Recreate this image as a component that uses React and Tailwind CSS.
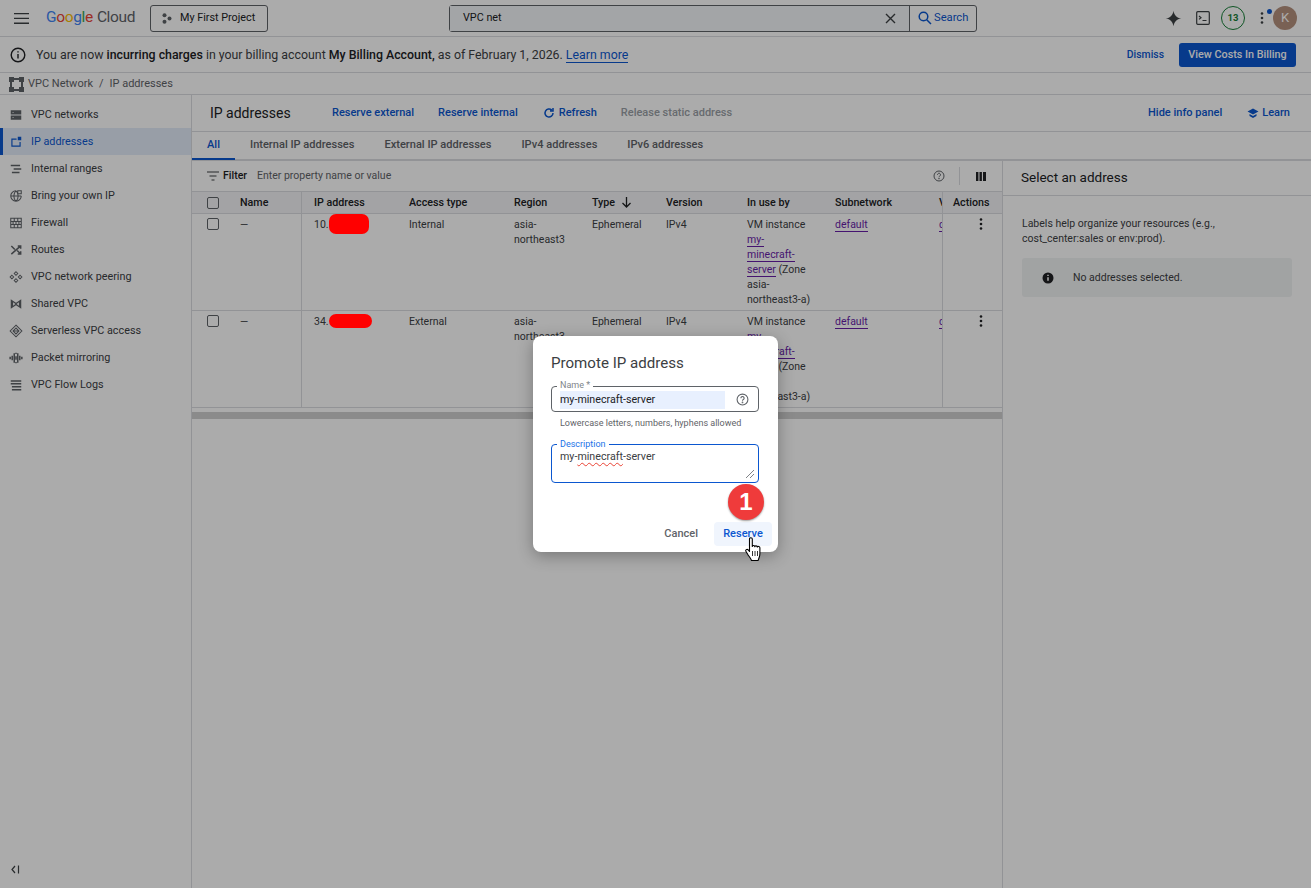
import { useState } from "react";

const font = "font-['Roboto','Liberation_Sans',sans-serif]";

const navItems = [
  { label: "VPC networks", path: "M3 4h18v7H3zM3 13h18v7H3z M6 7h2v1H6zM6 16h2v1H6z", fill: true },
  { label: "IP addresses", active: true, path: "M4 6h9v2H6v10h12v-6h2v8H4zM15 3h6v6h-6z", fill: true },
  { label: "Internal ranges", path: "M3 6h16M8 12h13M5 18h13", fill: false, strong: true },
  { label: "Bring your own IP", path: "M12 3a9 9 0 1 0 9 9M3 12h18M12 3c-5 5-5 13 0 18M12 3c5 5 5 13 0 18M15 3h6v5h-6z", fill: false },
  { label: "Firewall", path: "M3 4h18v16H3zM3 9.500h18M3 14.500h18M9 4v5.500M15 4v5.500M7 9.500v5M12 9.500v5M17 9.500v5M9 14.500V20M15 14.500V20", fill: false },
  { label: "Routes", path: "M4 5l6 6M14 13l6 6M20 5L4 19M15 5h5v5M15 19h5v-5", fill: false, strong: true },
  { label: "VPC network peering", path: "M12 3l3 3-3 3-3-3zM12 15l3 3-3 3-3-3zM5 9l3 3-3 3-3-3zM19 9l3 3-3 3-3-3z", fill: false },
  { label: "Shared VPC", path: "M3 4l9 6 9-6v16l-9-6-9 6zM7 9v6l4-3zM17 9v6l-4-3z", fill: true },
  { label: "Serverless VPC access", path: "M12 2l10 10-10 10L2 12zM7 12h10M12 7l-5 5 5 5 5-5z", fill: false },
  { label: "Packet mirroring", path: "M2 10v4M5.500 8v8M9 4v16M15 4v16M18.500 8v8M22 10v4M12 3v2M12 9v6M12 19v2", fill: false, strong: true },
  { label: "VPC Flow Logs", path: "M3 5h18M3 10h18M5 15h16M5 20h16", fill: false, strong: true },
];

const columns = [
  { label: "Name", w: "w-[61px]", pad: "" },
  { label: "IP address", w: "w-[108px]", pad: "pl-[12px] border-l border-[#dadce0]" },
  { label: "Access type", w: "w-[105px]", pad: "" },
  { label: "Region", w: "w-[78px]", pad: "" },
  { label: "Type", w: "w-[74px]", pad: "" },
  { label: "Version", w: "w-[81px]", pad: "" },
  { label: "In use by", w: "w-[88px]", pad: "" },
  { label: "Subnetwork", w: "w-[104px]", pad: "" },
  { label: "VPC", w: "w-[40px]", pad: "" },
];

const rows = [
  { ip: "10.", access: "Internal", blot: "w-[40px] h-[20px]", top: "top-[-4px]" },
  { ip: "34.", access: "External", blot: "w-[43px] h-[14px]", top: "top-[-1px]" },
];

function Checkbox() {
  return <div className="w-3 h-3 border border-[#5f6368] rounded-[2px] bg-transparent" />;
}

function Kebab() {
  return (
    <svg width="14" height="14" viewBox="0 0 14 14" fill="#202124">
      <circle cx="7" cy="2.500" r="1.300" />
      <circle cx="7" cy="7" r="1.300" />
      <circle cx="7" cy="11.500" r="1.300" />
    </svg>
  );
}

function HelpIcon({ size = 13 }) {
  return (
    <svg width={size} height={size} viewBox="0 0 24 24" fill="none" stroke="#5f6368" strokeWidth="2">
      <circle cx="12" cy="12" r="10" />
      <path d="M9 9.500a3 3 0 1 1 4.500 2.600c-1 .6-1.500 1.200-1.500 2.400" />
      <circle cx="12" cy="17.500" r=".6" fill="#5f6368" />
    </svg>
  );
}

function NavIcon({ item }) {
  const color = item.active ? "#0b57d0" : "#5f6368";
  return (
    <svg className="-mt-px" width="14" height="14" viewBox="0 0 24 24" fill={item.fill ? color : "none"} stroke={item.fill ? "none" : color} strokeWidth={item.strong ? 2.6 : 1.8} fillRule="evenodd">
      <path d={item.path} />
    </svg>
  );
}

function Header() {
  return (
    <div className="h-[37px] shrink-0 flex items-center border-b border-[#dadce0]">
      <svg className="ml-[14px]" width="15" height="11" viewBox="0 0 15 11" fill="#3c4043">
        <path d="M0 0h15v1.300H0zM0 4.800h15v1.300H0zM0 9.600h15v1.300H0z" />
      </svg>
      <div className="ml-[17px] w-[87px] text-[15.500px] tracking-[-0.35px] leading-none whitespace-nowrap">
        <span className="text-[#4285f4]">G</span>
        <span className="text-[#ea4335]">o</span>
        <span className="text-[#fbbc04]">o</span>
        <span className="text-[#4285f4]">g</span>
        <span className="text-[#34a853]">l</span>
        <span className="text-[#ea4335] mr-1">e</span>
        <span className="text-[#5f6368]">Cloud</span>
      </div>
      <div className="ml-[17px] w-[118px] h-[27px] border border-[#5f6368] rounded-[3px] flex items-center pl-[11px] gap-[8px] text-[10.800px] text-[#202124]">
        <svg width="10" height="11" viewBox="0 0 10 11" fill="#5f6368">
          <circle cx="2.500" cy="2.300" r="2" />
          <circle cx="7.500" cy="5.500" r="2" />
          <circle cx="2.500" cy="8.700" r="2" />
        </svg>
        My First Project
      </div>
      <div className="ml-[181px] w-[528px] h-[27px] flex border border-[#5f6368] rounded-[3px]">
        <div className="w-[460px] bg-[#f4f6f9] flex items-center pl-[13px] text-[10.800px] text-[#202124] border-r border-[#5f6368]">
          <span className="flex-1">VPC net</span>
          <svg className="mr-[13px]" width="11" height="11" viewBox="0 0 11 11" stroke="#3c4043" strokeWidth="1.400">
            <path d="M1 1l9 9M10 1l-9 9" />
          </svg>
        </div>
        <div className="flex-1 flex items-center pl-[8px] gap-[2px] text-[11.200px] text-[#0b57d0]">
          <svg width="14" height="14" viewBox="0 0 14 14" fill="none" stroke="#0b57d0" strokeWidth="1.500">
            <circle cx="5.500" cy="5.500" r="4.300" />
            <path d="M8.700 8.700L13 13" />
          </svg>
          Search
        </div>
      </div>
      <div className="ml-auto flex items-center">
        <svg width="17" height="17" viewBox="0 0 24 24" fill="#3c4043">
          <path d="M12 1c1 6.500 4.500 10 11 11-6.500 1-10 4.500-11 11-1-6.500-4.500-10-11-11 6.500-1 10-4.500 11-11z" />
        </svg>
        <svg className="ml-[14px]" width="14" height="14" viewBox="0 0 14 14" fill="none" stroke="#3c4043" strokeWidth="1.200">
          <rect x=".7" y=".7" width="12.600" height="12.600" rx="1" />
          <path d="M3 5l2 1.700L3 8.400M6.500 9.500h4" />
        </svg>
        <div className="ml-[11px] w-[24px] h-[24px] rounded-full border-[1.500px] border-[#188038] flex items-center justify-center text-[9.500px] font-bold text-[#188038]">
          13
        </div>
        <div className="ml-[14px] relative w-[14px] h-[14px]">
          <svg width="14" height="14" viewBox="0 0 14 14" fill="#3c4043">
            <circle cx="3" cy="2.500" r="1.300" />
            <circle cx="3" cy="7" r="1.300" />
            <circle cx="3" cy="11.500" r="1.300" />
          </svg>
          <div className="absolute left-[8px] top-[-2px] w-[5px] h-[5px] rounded-full bg-[#0b57d0]" />
        </div>
        <div className="mr-[14px] w-[24px] h-[24px] rounded-full bg-[#b5917e] flex items-center justify-center text-[13px] text-white">
          K
        </div>
      </div>
    </div>
  );
}

function Banner() {
  return (
    <div className="h-[36px] shrink-0 flex items-center border-b border-[#dadce0] pl-[10px] pr-[15px]">
      <svg width="16" height="16" viewBox="0 0 16 16" fill="none" stroke="#202124" strokeWidth="1.400">
        <circle cx="8" cy="8" r="6.800" />
        <path d="M8 7v4.500M8 4.200v1.400" />
      </svg>
      <p className="ml-[10px] pt-[1px] text-[12.350px] text-[#3c4043]">
        You are now <span className="text-[#202124] font-medium">incurring charges</span> in your billing account <span className="text-[#202124] font-medium">My Billing Account,</span> as of February 1, 2026. <span className="text-[#0b57d0] border-b border-[#0b57d0]">Learn more</span>
      </p>
      <span className="ml-auto pt-[1px] text-[10.400px] font-medium text-[#0b57d0]">Dismiss</span>
      <div className="ml-[15px] w-[117px] h-[24px] pt-[1px] rounded-[3px] bg-[#0b57d0] flex items-center justify-center text-[10.800px] font-medium text-white">
        View Costs In Billing
      </div>
    </div>
  );
}

function Sidebar() {
  return (
    <div className="w-[192px] shrink-0 border-r border-[#dadce0] pt-[6px] flex flex-col">
      {navItems.map((item) => (
        <div
          key={item.label}
          className={`h-[27px] pt-[1px] flex items-center gap-[8px] text-[10.800px] ${
            item.active
              ? "bg-[#e3ecfa] text-[#0b57d0] border-l-[3px] border-[#0b57d0] pl-[6px]"
              : "text-[#3c4043] pl-[9px]"
          }`}
        >
          <NavIcon item={item} />
          {item.label}
        </div>
      ))}
      <div className="mt-auto mb-[13px] ml-[10px] text-[#3c4043]">
        <svg width="11" height="11" viewBox="0 0 11 11" fill="none" stroke="#3c4043" strokeWidth="1.200">
          <path d="M5 2L2 5.500 5 9M2 5.500h0M8.500 1.500v8" />
        </svg>
      </div>
    </div>
  );
}

function Toolbar() {
  return (
    <div className="h-[37px] shrink-0 flex items-center border-b border-[#dadce0] pl-[18px] pr-[21px] text-[11px] font-medium text-[#0b57d0]">
      <span className="w-[122px] text-[14px] font-normal text-[#202124]">IP addresses</span>
      <span>Reserve external</span>
      <span className="ml-[24px]">Reserve internal</span>
      <span className="ml-[25px] flex items-center gap-[4px]">
        <svg width="12" height="12" viewBox="0 0 24 24" fill="none" stroke="#0b57d0" strokeWidth="3">
          <path d="M20 12a8 8 0 1 1-2.500-5.800M20 2v6h-6" />
        </svg>
        Refresh
      </span>
      <span className="ml-[24px] text-[#9aa0a6]">Release static address</span>
      <span className="ml-auto">Hide info panel</span>
      <span className="ml-[25px] flex items-center gap-[3px]">
        <svg width="12" height="12" viewBox="0 0 24 24" fill="#0b57d0">
          <path d="M12 3L1 9l11 6 11-6zM5 14v4l7 4 7-4v-4l-7 4z" />
        </svg>
        Learn
      </span>
    </div>
  );
}

function Tabs() {
  const tabs = ["Internal IP addresses", "External IP addresses", "IPv4 addresses", "IPv6 addresses"];
  return (
    <div className="h-[29px] shrink-0 flex border-b-2 border-[#dadce0] text-[11.050px] font-medium text-[#5f6368]">
      <div className="w-[43px] h-[28px] flex items-center justify-center text-[#0b57d0] border-b-2 border-[#0b57d0]">All</div>
      <div className="flex items-center gap-[30px] pl-[15px] h-[26px]">
        {tabs.map((t) => (
          <span key={t}>{t}</span>
        ))}
      </div>
    </div>
  );
}

function Table() {
  return (
    <div className="flex-1 min-w-0 flex flex-col">
      <div className="h-[31px] shrink-0 flex items-center border-b border-[#dadce0] pl-[15px] pr-[16px] text-[10.500px]">
        <svg width="12" height="10" viewBox="0 0 12 10" stroke="#3c4043" strokeWidth="1.200">
          <path d="M0 1h12M2.500 5h7M4.500 9h3" />
        </svg>
        <span className="ml-[4px] font-medium text-[#202124]">Filter</span>
        <span className="ml-[10px] text-[#5f6368]">Enter property name or value</span>
        <span className="ml-auto"><HelpIcon size={12} /></span>
        <span className="ml-[14px] w-px h-[18px] bg-[#dadce0]" />
        <svg className="ml-[16px]" width="10" height="9" viewBox="0 0 10 9" fill="#202124">
          <path d="M0 0h2.400v9H0zM3.500 0h2.400v9H3.500zM7 0h3v9H7z" />
        </svg>
      </div>
      <div className="flex text-[10.500px] text-[#3c4043]">
        <div className="w-[750px] overflow-hidden">
          <div className="flex h-[22px] bg-[#f3f4f6] border-b border-[#dadce0] font-medium text-[10.700px] text-[#202124] items-center w-max">
            <div className="w-[48px] pl-[15px]"><Checkbox /></div>
            {columns.map((c) => (
              <div key={c.label} className={`${c.w} ${c.pad} h-full pt-[1px] flex items-center gap-[6px] shrink-0`}>
                {c.label}
                {c.label === "Type" && (
                  <svg className="-mt-[2px]" width="11" height="11" viewBox="0 0 11 11" fill="none" stroke="#202124" strokeWidth="1.300">
                    <path d="M5.500 0v10M1.500 6l4 4 4-4" />
                  </svg>
                )}
              </div>
            ))}
          </div>
          {rows.map((row) => (
            <div key={row.ip} className="flex h-[97px] border-b border-[#dadce0] leading-[15px] w-max">
              <div className="w-[48px] pl-[15px] pt-[4px]"><Checkbox /></div>
              <div className="w-[61px] pt-[3px]">—</div>
              <div className="w-[108px] pl-[12px] pt-[3px] border-l border-[#dadce0]">
                <span className="relative">
                  {row.ip}
                  <span className={`absolute left-full ${row.top} ${row.blot} rounded-[7px] bg-[#ff0000] z-30`} />
                </span>
              </div>
              <div className="w-[105px] pt-[3px]">{row.access}</div>
              <div className="w-[78px] pt-[3px] pr-[8px]">asia-northeast3</div>
              <div className="w-[74px] pt-[3px]">Ephemeral</div>
              <div className="w-[81px] pt-[3px]">IPv4</div>
              <div className="w-[88px] pt-[3px]">
                <div className="w-[70px]">
                  VM instance{" "}
                  <span className="text-[#681da8] border-b border-[#681da8]">my-<br />minecraft-<br />server</span> (Zone asia-northeast3-a)
                </div>
              </div>
              <div className="w-[104px] pt-[3px]">
                <span className="text-[#681da8] border-b border-[#681da8]">default</span>
              </div>
              <div className="w-[40px] pt-[3px]">
                <span className="text-[#681da8] border-b border-[#681da8]">default</span>
              </div>
            </div>
          ))}
        </div>
        <div className="w-[60px] border-l border-[#dadce0]">
          <div className="h-[22px] pt-[1px] bg-[#f3f4f6] border-b border-[#dadce0] font-medium text-[10.700px] text-[#202124] flex items-center pl-[10px]">Actions</div>
          {rows.map((row) => (
            <div key={row.ip} className="h-[97px] border-b border-[#dadce0] pl-[31px] pt-[3px]">
              <Kebab />
            </div>
          ))}
        </div>
      </div>
      <div className="mt-[4px] h-[7px] bg-[#d0d0d0]" />
    </div>
  );
}

function InfoPanel() {
  return (
    <div className="w-[309px] shrink-0 border-l border-[#dadce0] text-[10.500px] text-[#202124]">
      <div className="h-[35px] pb-[2px] flex items-center pl-[18px] border-b border-[#dadce0] text-[13.500px] text-[#202124]">
        Select an address
      </div>
      <p className="ml-[19px] mt-[20px] w-[230px] leading-[15px] text-[#3c4043]">
        Labels help organize your resources (e.g., cost_center:sales or env:prod).
      </p>
      <div className="ml-[19px] mt-[12px] w-[270px] h-[39px] bg-[#f1f3f4] rounded-[3px] flex items-center pl-[20px] text-[#3c4043]">
        <svg width="12" height="12" viewBox="0 0 12 12">
          <circle cx="6" cy="6" r="5.500" fill="#202124" />
          <path d="M6 5.200v3.600M6 2.800v1.300" stroke="#fff" strokeWidth="1.500" />
        </svg>
        <span className="ml-[19px]">No addresses selected.</span>
      </div>
    </div>
  );
}

function Dialog() {
  const [name] = useState("my-minecraft-server");
  return (
    <div className="absolute z-20 left-[533px] top-[336px] w-[245px] h-[216px] bg-white rounded-[8px] shadow-[0_4px_16px_rgba(0,0,0,0.3)] pt-[18px] pl-[18px] pr-[19px] text-[#3c4043]">
      <h2 className="text-[15.100px] leading-[18px] text-[#3c4043]">Promote IP address</h2>
      <div className="relative mt-[14px] h-[26px] border border-[#5f6368] rounded-[4px] flex items-center pl-[8px] pr-[9px]">
        <span className="absolute left-[5px] top-[-7px] bg-white px-[3px] text-[9px] leading-[11px] text-[#80868b]">Name *</span>
        <span className="mt-[1px] w-[165px] h-[18px] bg-[#e8f0fe] text-[10.700px] leading-[18px] text-[#202124]">{name}</span>
        <span className="ml-auto"><HelpIcon size={13} /></span>
      </div>
      <p className="ml-[9px] mt-[5px] text-[9px] leading-[12px] text-[#5f6368]">Lowercase letters, numbers, hyphens allowed</p>
      <div className="relative mt-[15px] h-[39px] border border-[#0b57d0] rounded-[4px] pl-[8px] pt-[5px] text-[10.700px] leading-[13px] text-[#3c4043]">
        <span className="absolute left-[5px] top-[-6px] bg-white px-[3px] text-[9px] leading-[11px] text-[#1a73e8]">Description</span>
        my-<span className="underline decoration-wavy decoration-[#ea4335] decoration-1 underline-offset-2">minecraft</span>-server
        <svg className="absolute right-[4px] bottom-[4px]" width="8" height="8" viewBox="0 0 8 8" stroke="#5f6368" strokeWidth=".8">
          <path d="M0 8l8-8M4 8l4-4" />
        </svg>
      </div>
      <div className="absolute right-[6px] bottom-[6px] flex items-center text-[11px] font-medium">
        <span className="mr-[16px] text-[#5f6368]">Cancel</span>
        <span className="w-[58px] h-[24px] bg-[#f0f5fd] rounded-[4px] flex items-center justify-center text-[#0b57d0]">Reserve</span>
      </div>
    </div>
  );
}

export default function App() {
  return (
    <div className={`relative w-full h-screen overflow-hidden bg-white flex flex-col ${font}`}>
      <Header />
      <Banner />
      <div className="h-[22px] shrink-0 flex items-center border-b border-[#dadce0] pl-[9px] pt-[1px] text-[11px] text-[#5f6368]">
        <svg width="15" height="15" viewBox="0 0 15 15" fill="#5f6368">
          <path d="M0 0h5v5H0zM10 0h5v5h-5zM0 10h5v5H0zM10 10h5v5h-5z" />
          <path d="M2 2h11v11H2z" fill="none" stroke="#5f6368" strokeWidth="2" />
        </svg>
        <span className="ml-[4px]">VPC Network</span>
        <span className="mx-[6px]">/</span>
        <span>IP addresses</span>
      </div>
      <div className="flex-1 min-h-0 flex">
        <Sidebar />
        <div className="flex-1 min-w-0 flex flex-col">
          <Toolbar />
          <Tabs />
          <div className="flex-1 min-h-0 flex">
            <Table />
            <InfoPanel />
          </div>
        </div>
      </div>
      {/* dim layer behind the dialog */}
      <div className="absolute inset-0 z-10 bg-black/[0.33]" />
      <Dialog />
      <div className="absolute z-30 left-[728px] top-[484px] w-[36px] h-[36px] rounded-full bg-[#ef3b3b] shadow-[0_1px_2px_rgba(0,0,0,0.4)] flex items-center justify-center text-white text-[24px] font-bold font-['Liberation_Sans',sans-serif]">
        1
      </div>
      <svg className="absolute z-30 left-[745px] top-[537px]" width="18" height="26" viewBox="0 0 18 26" fill="#fff" stroke="#000" strokeWidth="1.100" strokeLinejoin="round">
        <path d="M4.500 2c0-1.700 2.800-1.700 2.800 0v7.500c0-1.300 2.500-1.300 2.500.2 0-1.200 2.500-1.200 2.500.4 0-1 2.600-1 2.600.6v6c0 3-1.200 4.300-1.700 6.800H6.500c-.5-1.800-2-3.700-3.500-5.700L1 14.500c-1-1.600 1-2.800 2.200-1.600l1.300 1.600z" />
        <path d="M7.500 14v5M10 14v5M12.500 14v5" fill="none" strokeWidth=".8" />
      </svg>
    </div>
  );
}
